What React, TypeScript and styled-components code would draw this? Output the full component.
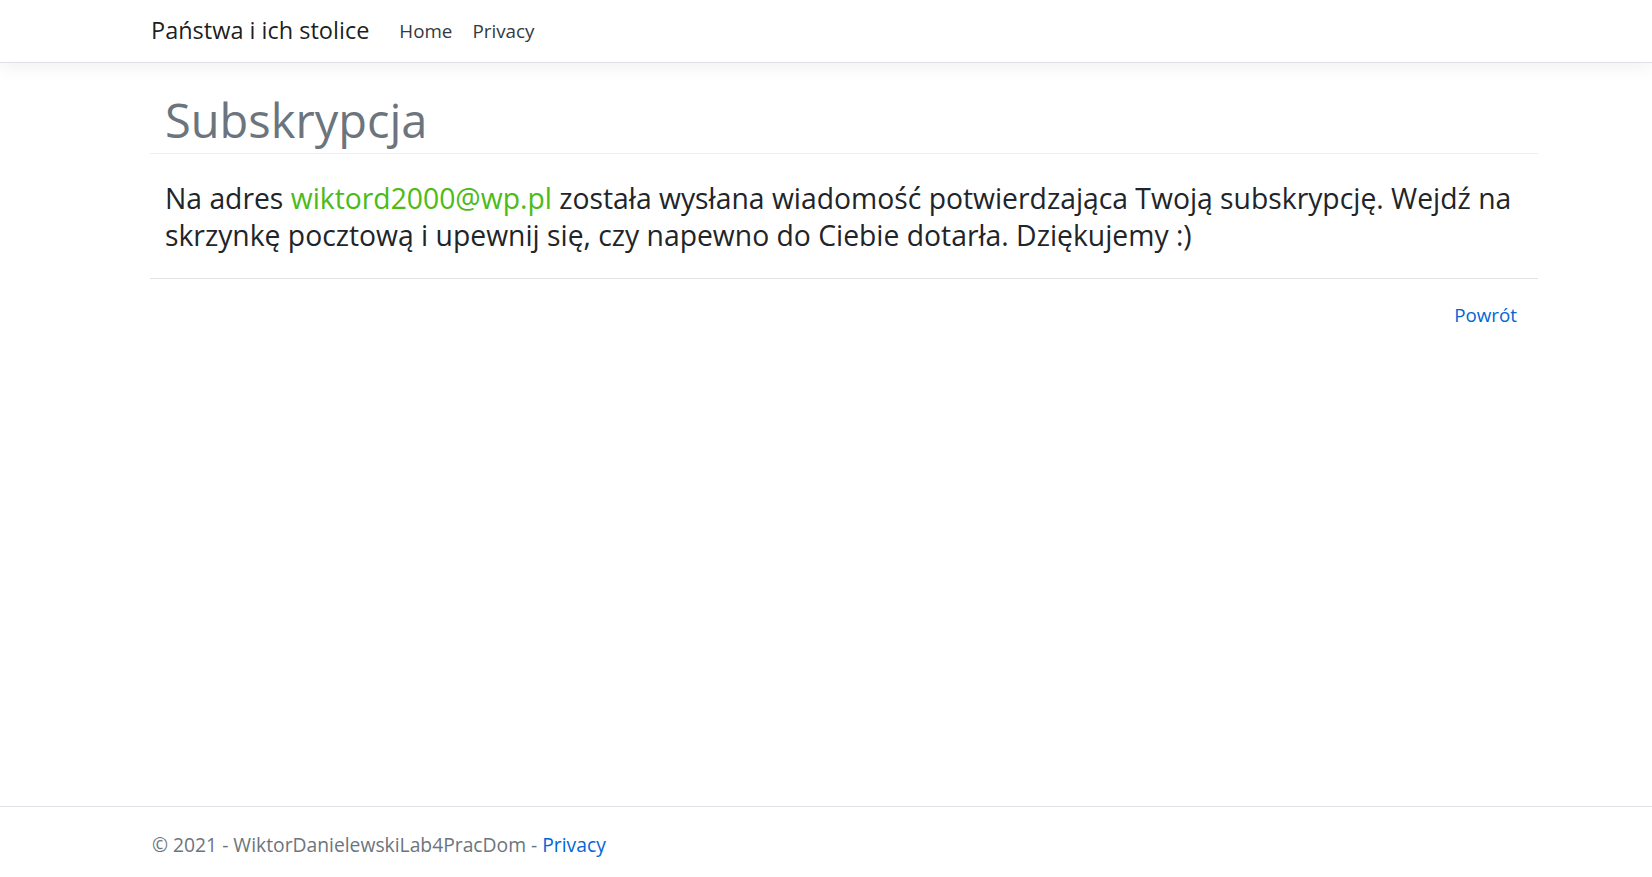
import React from "react";
import styled, { createGlobalStyle } from "styled-components";

const GlobalStyle = createGlobalStyle`
  html, body { margin: 0; padding: 0; }
  body {
    font-family: "Open Sans", "Noto Sans", sans-serif;
    color: #212529;
    background: #fff;
  }
  * { box-sizing: border-box; }
`;

const Page = styled.div`
  display: flex;
  flex-direction: column;
  min-height: 100vh;
  overflow: hidden;
`;

const Navbar = styled.nav`
  height: 63px;
  border-bottom: 1px solid #dee2e6;
  box-shadow: 0 6px 16px rgba(0, 0, 0, 0.05);
  display: flex;
  align-items: center;
  padding-left: 151px;
  position: relative;
  z-index: 1;
`;

const Brand = styled.a`
  font-size: 23.5px;
  color: rgba(0, 0, 0, 0.9);
  text-decoration: none;
  margin-right: 20px;
  line-height: 1.5;
`;

const NavList = styled.ul`
  display: flex;
  list-style: none;
  margin: 0;
  padding: 0;
`;

const NavLink = styled.a`
  display: block;
  font-size: 18.8px;
  padding: 10px 10px;
  color: #343a40;
  text-decoration: none;
`;

const Main = styled.main`
  flex: 1;
  padding: 0 114px 0 150px;
`;

const Title = styled.h1`
  margin: 26px 0 0;
  padding: 0 15px 2px;
  font-size: 47px;
  line-height: 62px;
  font-weight: 400;
  color: #6c757d;
  border-bottom: 1px solid rgba(0, 0, 0, 0.07);
`;

const Message = styled.p`
  margin: 0;
  padding: 26px 15px 24px;
  font-size: 28.3px;
  line-height: 37px;
  color: #212529;
  border-bottom: 1px solid rgba(0, 0, 0, 0.11);
`;

const Email = styled.span`
  color: #4cbb17;
`;

const Actions = styled.div`
  display: flex;
  justify-content: flex-end;
  padding: 21px 21px 0 0;
`;

const Link = styled.a`
  font-size: 18.8px;
  line-height: 30px;
  color: #0366d6;
  text-decoration: none;
`;

const Footer = styled.footer`
  height: 71px;
  border-top: 1px solid #dee2e6;
  padding-left: 152px;
  font-size: 19.3px;
  line-height: 76px;
  color: #6c757d;
  white-space: nowrap;
  overflow: hidden;
`;

const FooterLink = styled(Link)`
  font-size: inherit;
  line-height: inherit;
`;

export default function App() {
  return (
    <>
      <GlobalStyle />
      <Page>
        <Navbar>
          <Brand href="#">Państwa i ich stolice</Brand>
          <NavList>
            <li>
              <NavLink href="#">Home</NavLink>
            </li>
            <li>
              <NavLink href="#">Privacy</NavLink>
            </li>
          </NavList>
        </Navbar>
        <Main>
          <Title>Subskrypcja</Title>
          <Message>
            Na adres <Email>wiktord2000@wp.pl</Email> została wysłana wiadomość
            potwierdzająca Twoją subskrypcję. Wejdź na skrzynkę pocztową i
            upewnij się, czy napewno do Ciebie dotarła. Dziękujemy :)
          </Message>
          <Actions>
            <Link href="#">Powrót</Link>
          </Actions>
        </Main>
        <Footer>
          © 2021 - WiktorDanielewskiLab4PracDom -{" "}
          <FooterLink href="#">Privacy</FooterLink>
        </Footer>
      </Page>
    </>
  );
}
